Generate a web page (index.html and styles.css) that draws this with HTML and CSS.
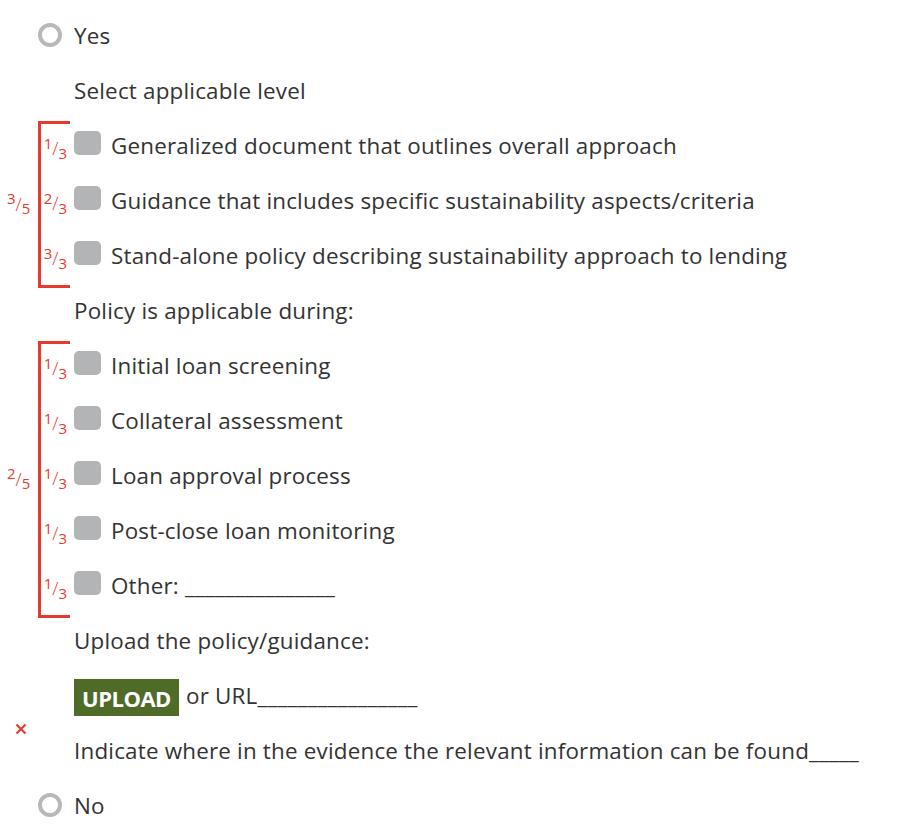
FILE: index.html
```html
<!DOCTYPE html>
<html>
<head>
<meta charset="utf-8">
<link rel="stylesheet" href="styles.css">
</head>
<body>
<div class="form">
  <div class="row"><div class="gutter"><span class="radio"></span></div><span class="label">Yes</span></div>
  <div class="row"><div class="gutter"></div><span class="label">Select applicable level</span></div>

  <div class="group">
    <span class="outer frac"><span class="num">3</span><span class="sl">/</span><span class="den">5</span></span>
    <div class="row"><div class="gutter"><span class="frac"><span class="num">1</span><span class="sl">/</span><span class="den">3</span></span></div><span class="check"></span><span class="label">Generalized document that outlines overall approach</span></div>
    <div class="row"><div class="gutter"><span class="frac"><span class="num">2</span><span class="sl">/</span><span class="den">3</span></span></div><span class="check"></span><span class="label">Guidance that includes specific sustainability aspects/criteria</span></div>
    <div class="row"><div class="gutter"><span class="frac"><span class="num">3</span><span class="sl">/</span><span class="den">3</span></span></div><span class="check"></span><span class="label">Stand-alone policy describing sustainability approach to lending</span></div>
  </div>

  <div class="row"><div class="gutter"></div><span class="label">Policy is applicable during:</span></div>

  <div class="group">
    <span class="outer frac"><span class="num">2</span><span class="sl">/</span><span class="den">5</span></span>
    <div class="row"><div class="gutter"><span class="frac"><span class="num">1</span><span class="sl">/</span><span class="den">3</span></span></div><span class="check"></span><span class="label">Initial loan screening</span></div>
    <div class="row"><div class="gutter"><span class="frac"><span class="num">1</span><span class="sl">/</span><span class="den">3</span></span></div><span class="check"></span><span class="label">Collateral assessment</span></div>
    <div class="row"><div class="gutter"><span class="frac"><span class="num">1</span><span class="sl">/</span><span class="den">3</span></span></div><span class="check"></span><span class="label">Loan approval process</span></div>
    <div class="row"><div class="gutter"><span class="frac"><span class="num">1</span><span class="sl">/</span><span class="den">3</span></span></div><span class="check"></span><span class="label">Post-close loan monitoring</span></div>
    <div class="row"><div class="gutter"><span class="frac"><span class="num">1</span><span class="sl">/</span><span class="den">3</span></span></div><span class="check"></span><span class="label">Other: _______________</span></div>
  </div>

  <div class="row"><div class="gutter"></div><span class="label">Upload the policy/guidance:</span></div>
  <div class="row"><div class="gutter"></div><span class="upload">UPLOAD</span><span class="label">or URL________________</span></div>
  <div class="row"><span class="xmark"><svg width="12" height="12" viewBox="0 0 12 12"><path d="M1.5 1.5 L10.5 10.5 M10.5 1.5 L1.5 10.5" stroke="#e63a2e" stroke-width="2.2" fill="none"/></svg></span><div class="gutter"></div><span class="label">Indicate where in the evidence the relevant information can be found_____</span></div>
  <div class="row"><div class="gutter"><span class="radio"></span></div><span class="label">No</span></div>
</div>
</body>
</html>
```

FILE: styles.css
```css
html, body {
  margin: 0;
  padding: 0;
  background: #fff;
}
body {
  font-family: "Open Sans", "Noto Sans", sans-serif;
  color: #333;
  font-size: 22.4px;
  letter-spacing: 0.2px;
}
.form {
  padding-top: 8px;
}
.row {
  position: relative;
  display: flex;
  align-items: center;
  height: 55px;
}
.gutter {
  width: 74px;
  flex: none;
  display: flex;
  align-items: center;
  justify-content: flex-end;
  padding-right: 7px;
  box-sizing: border-box;
  height: 100%;
}
.radio {
  width: 16px;
  height: 16px;
  border: 4px solid #b7b8b9;
  border-radius: 50%;
  margin-right: 5px;
  margin-top: -2px;
}
.label {
  white-space: nowrap;
}
.check {
  width: 27px;
  height: 24px;
  border-radius: 5px;
  background: #b3b4b6;
  margin-right: 10px;
  margin-top: -6px;
  flex: none;
}
.frac {
  color: #e63a2e;
  font-family: "Open Sans", sans-serif;
  letter-spacing: 0;
  line-height: 1;
  display: inline-flex;
  align-items: center;
  height: 26px;
  margin-top: 5px;
}
.frac .num, .frac .den {
  font-size: 15px;
  position: relative;
}
.frac .num { top: -5px; }
.frac .den { top: 5px; }
.frac .sl {
  font-size: 18px;
  font-weight: 300;
}
.group {
  position: relative;
}
.group::before {
  content: "";
  position: absolute;
  left: 38px;
  top: 3px;
  bottom: -5px;
  width: 29px;
  border: 3px solid #e63a2e;
  border-right: none;
}
.outer {
  position: absolute;
  left: 7px;
  top: 50%;
  margin-top: -10px;
}
.upload {
  background: #4e6b28;
  color: #fff;
  font-weight: bold;
  height: 37px;
  width: 105px;
  display: flex;
  align-items: center;
  justify-content: center;
  margin-right: 7px;
  margin-top: 4px;
  font-size: 22px;
  letter-spacing: -0.5px;
}
.xmark {
  position: absolute;
  left: 15px;
  top: 0;
  line-height: 0;
}
```
